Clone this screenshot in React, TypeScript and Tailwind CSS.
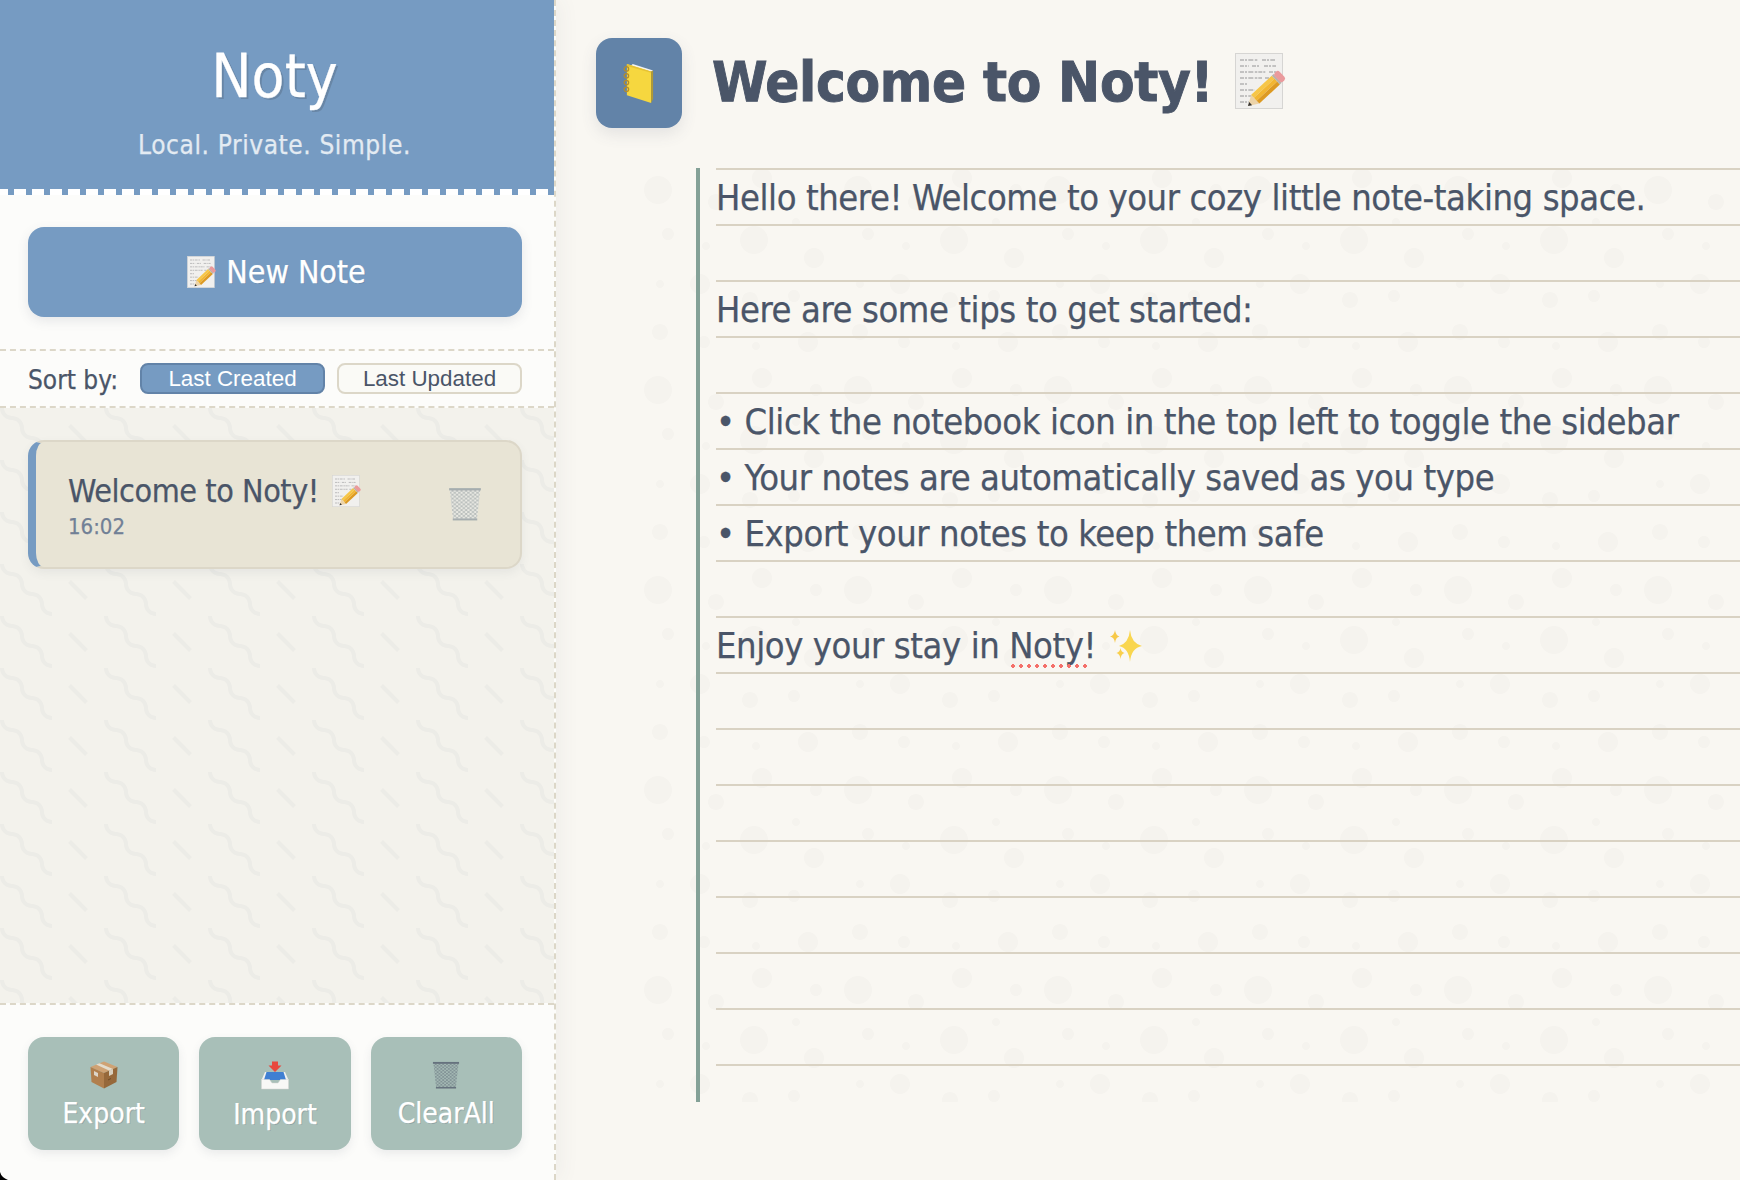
import React from "react";

function Memo({ className }: { className: string }) {
  return (
    <svg viewBox="0 0 52 56" className={className}>
      <rect x="0.5" y="0.5" width="47" height="55" fill="#f1f0ee" stroke="#d6d5d3" />
      <g stroke="#77777a" strokeWidth="0.75" fill="none" strokeDasharray="4 1 2 1.3 5 1.5 2.5 1">
        <path d="M5 7h18M27 7h13" />
        <path d="M5 13h9M17 13h7M29 13h12" />
        <path d="M5 19h26M34 19h8" />
        <path d="M5 25h22M30 25h8" />
        <path d="M5 31h7" />
        <path d="M5 37h15" />
        <path d="M5 43h14" />
        <path d="M5 49h9" />
      </g>
      <g transform="translate(13 53) rotate(-43)">
        <polygon points="0,0 10,-6 10,6" fill="#ecd3a8" />
        <polygon points="0,0 3.6,-2.2 3.6,2.2" fill="#333" />
        <rect x="10" y="-6" width="28" height="4" fill="#f6c648" />
        <rect x="10" y="-2" width="28" height="4" fill="#f2b632" />
        <rect x="10" y="2" width="28" height="4" fill="#dd9a22" />
        <rect x="38" y="-6" width="2.5" height="12" fill="#b9b3aa" />
        <rect x="40" y="-6" width="6.5" height="12" rx="2.5" fill="#ea9a9c" />
      </g>
    </svg>
  );
}

function Basket({ className, id, stroke, rim, fill }: { className: string; id: string; stroke: string; rim: string; fill: string }) {
  return (
    <svg viewBox="0 0 30 30" className={className}>
      <defs>
        <pattern id={id} width="4" height="3.4" patternUnits="userSpaceOnUse">
          <path d="M0 0L4 3.4M4 0L0 3.4" stroke={stroke} strokeWidth="0.5" />
        </pattern>
      </defs>
      <path d="M1.5 2h27l-3 27h-21z" fill={fill} />
      <path d="M1.5 2h27l-3 27h-21z" fill={`url(#${id})`} />
      <path d="M1 1h28v2H1z" fill={rim} />
      <path d="M4.2 27.8h21.6v1.7H4.2z" fill={rim} />
    </svg>
  );
}

function Box({ className }: { className: string }) {
  return (
    <svg viewBox="0 0 28 28" className={className}>
      <polygon points="14,0.5 27.5,6 14,12 0.5,6" fill="#cfa274" />
      <polygon points="0.5,6 14,12 14,27.5 1.5,21" fill="#b17f4d" />
      <polygon points="27.5,6 14,12 14,27.5 26.5,21" fill="#96683a" />
      <polygon points="6,3.6 9.5,2.2 23,8 19,9.6" fill="#e3dccd" />
      <polygon points="19,9.6 23,8 23,13 19,15" fill="#d9cfbd" />
      <polygon points="4,10 8,12 8,16 4,14" fill="#ddd5c8" />
      <path d="M18 19l3-1.5" stroke="#6f4b28" strokeWidth="1" />
    </svg>
  );
}

function Inbox({ className }: { className: string }) {
  return (
    <svg viewBox="0 0 28 29" className={className}>
      <polygon points="11,0.5 17,0.5 17,4.5 20.5,4.5 14,11 7.5,4.5 11,4.5" fill="#e8483f" />
      <polygon points="4,11 24,11 27.5,19 0.5,19" fill="#f2f2f0" />
      <polygon points="5.5,11 22.5,11 25,19 3,19" fill="#3f7fd2" />
      <path d="M0.5 18.5h8l2.5 3.5h6l2.5-3.5h8v9.5h-27z" fill="#f8f8f6" stroke="#d6d6d3" strokeWidth="0.5" />
    </svg>
  );
}

function Notebook({ className }: { className: string }) {
  return (
    <svg viewBox="0 0 33 42" className={className}>
      <polygon points="8,1 31,8 31,37 29,38 29,9" fill="#8f8a74" />
      <polygon points="10,1 31,7.5 29,9 8,3" fill="#f3f3f0" />
      <polygon points="4,1 29,8.5 29,41 4,33" fill="#f6d73f" />
      <polygon points="4,1 29,8.5 29,10 4,3" fill="#e6c233" />
      <polygon points="29,8.5 31,7.5 31,37 29,41" fill="#b09a35" />
      <g fill="none" stroke="#b58d2a" strokeWidth="1.3">
        <circle cx="3.5" cy="6" r="2.3" />
        <circle cx="3.5" cy="13" r="2.3" />
        <circle cx="3.5" cy="20" r="2.3" />
        <circle cx="3.5" cy="27" r="2.3" />
      </g>
    </svg>
  );
}

function Sparkles({ className }: { className: string }) {
  return (
    <svg viewBox="0 0 32 32" className={className}>
      <path d="M20 0Q21.2 13 32 16Q21.2 18 20 32Q18.8 18 9 16Q18.8 13 20 0z" fill="#f9d64f" />
      <path d="M5 0Q5.6 5.4 9.5 6.5Q5.6 7.4 5 13Q4.4 7.4 0 6.5Q4.4 5.4 5 0z" fill="#f7c948" />
      <path d="M10.5 18Q11 21.8 14.5 23Q11 24 10.5 29Q10 24 6.5 23Q10 21.8 10.5 18z" fill="#f9cf4c" />
    </svg>
  );
}

const Line = ({ children }: { children?: React.ReactNode }) => (
  <div className="h-14 pl-0 leading-[56px] whitespace-nowrap">{children}</div>
);

export default function App() {
  return (
    <div className="relative flex h-screen w-full overflow-hidden bg-[#f9f7f2] font-['DejaVu_Sans_Condensed','DejaVu_Sans',sans-serif] text-[#4a5568] [-webkit-text-stroke:0.25px]">
      <aside className="relative z-10 flex w-[556px] shrink-0 flex-col border-r-2 border-dashed border-[#dcd7c8] bg-[#fcfcfa] shadow-[4px_0_20px_rgba(74,85,104,0.06)]">
        <header className="flex h-[189px] flex-col items-center bg-[#769bc2] pt-[40px] pr-[5px] text-white">
          <h1 className="text-[60px] leading-[72px] font-normal [text-shadow:2px_2px_0_rgba(74,85,104,0.3)]">Noty</h1>
          <p className="mt-[15px] text-[26px] leading-[36px] tracking-[0.6px] opacity-80">Local. Private. Simple.</p>
        </header>
        <div className="h-[6px] bg-[linear-gradient(90deg,#ffffff_12px,#769bc2_12px)] bg-[length:18px_6px] bg-[position:-4px_0]"></div>

        <div className="pt-8 pr-8 pb-8 pl-7">
          <button className="flex h-[90px] w-full items-center justify-center gap-[9px] rounded-2xl bg-[#769bc2] pl-[3px] text-[32px] text-white shadow-[0_4px_12px_rgba(74,85,104,0.12)] [text-shadow:1px_1px_0_rgba(74,85,104,0.2)]">
            <Memo className="h-8 w-[30px]" />
            <span className="tracking-[-0.1px]">New Note</span>
          </button>
        </div>

        <div className="flex h-[59px] items-center border-y-2 border-dashed border-[#dcd7c8] pr-8 pl-7">
          <span className="w-[112px] pt-[2px] text-[26px] leading-8">Sort by:</span>
          <div className="flex flex-1 gap-3 [-webkit-text-stroke:0]">
            <button className="h-[31px] flex-1 rounded-lg border-2 border-[#6283a8] bg-[#769bc2] font-['Liberation_Sans',sans-serif] text-[22.4px] leading-[24px] text-white">Last Created</button>
            <button className="h-[31px] flex-1 rounded-lg border-2 border-[#dcd7c8] bg-[#fafaf6] font-['Liberation_Sans',sans-serif] text-[22.4px] leading-[24px]">Last Updated</button>
          </div>
        </div>

        <div className="flex-1 bg-[#f3f2ec] bg-[url('data:image/svg+xml,%3Csvg%20xmlns=%22http://www.w3.org/2000/svg%22%20width=%2252%22%20height=%2226%22%20viewBox=%220%200%2052%2026%22%3E%3Cpath%20fill=%22%234a5568%22%20fill-opacity=%220.04%22%20d=%22M10%2010c0-2.21-1.79-4-4-4-3.314%200-6-2.686-6-6h2c0%202.21%201.79%204%204%204%203.314%200%206%202.686%206%206%200%202.21%201.79%204%204%204%203.314%200%206%202.686%206%206%200%202.21%201.79%204%204%204v2c-3.314%200-6-2.686-6-6%200-2.21-1.79-4-4-4-3.314%200-6-2.686-6-6zm25.464-1.95l8.486%208.486-1.414%201.414-8.486-8.486%201.414-1.414z%22/%3E%3C/svg%3E')] bg-[length:104px_52px] pt-8 pr-8 pl-7">
          <div className="flex h-[129px] items-center rounded-2xl border-2 border-l-8 border-[#dcd7c8] border-l-[#769bc2] bg-[#e8e4d5] pr-[38px] pl-[32px] shadow-[0_4px_10px_rgba(74,85,104,0.08)]">
            <div className="flex-1 pt-[2px]">
              <div className="flex items-center gap-[13px] text-[32px] leading-[40px] tracking-[-0.42px] whitespace-nowrap">
                Welcome to Noty!
                <Memo className="h-8 w-[30px]" />
              </div>
              <div className="mt-[2px] text-[22px] leading-[28px] text-[#718096]">16:02</div>
            </div>
            <Basket className="mt-[-2px] h-[36px] w-[34px]" id="mesh-a" stroke="#939b9d" rim="#a6adaf" fill="#e9e9e3" />
          </div>
        </div>

        <footer className="flex h-[177px] gap-5 border-t-2 border-dashed border-[#dcd7c8] pt-[32px] pr-8 pl-7">
          {[
            { label: "Export", icon: <Box className="h-7 w-7" /> },
            { label: "Import", icon: <Inbox className="h-[29px] w-7" /> },
            { label: "ClearAll", icon: <Basket className="h-7 w-7" id="mesh-b" stroke="#66727e" rim="#66727e" fill="#a3b8b3" /> },
          ].map((b) => (
            <button key={b.label} className="flex h-[113px] flex-1 flex-col items-center rounded-2xl bg-[#a8bfb8] pt-6 text-[28px] leading-[36px] text-white shadow-[0_4px_10px_rgba(74,85,104,0.1)] [text-shadow:1px_1px_0_rgba(74,85,104,0.25)]">
              {b.icon}
              <span className="mt-[7px]">{b.label}</span>
            </button>
          ))}
        </footer>
      </aside>

      <main className="min-w-0 flex-1 pt-[38px] pl-10">
        <div className="flex h-[130px] items-start">
          <button className="flex h-[90px] w-[86px] shrink-0 items-center justify-center rounded-2xl bg-[#6283a8] shadow-[0_6px_16px_rgba(74,85,104,0.12)]">
            <Notebook className="h-[41px] w-8" />
          </button>
          <h2 className="mt-[8px] ml-[30px] flex items-center gap-[22px] text-[56px] leading-[72px] font-bold tracking-[-0.35px] whitespace-nowrap [-webkit-text-stroke:0.9px]">
            Welcome to Noty!
            <Memo className="mb-[3px] h-14 w-[52px]" />
          </h2>
        </div>

        <div className="ml-10 h-[934px] bg-[url('data:image/svg+xml,%3Csvg%20xmlns=%22http://www.w3.org/2000/svg%22%20width=%22100%22%20height=%22100%22%20viewBox=%220%200%20100%20100%22%3E%3Cpath%20fill=%22%234a4a3a%22%20fill-opacity=%220.02%22%20fill-rule=%22evenodd%22%20d=%22M11%2018c3.866%200%207-3.134%207-7s-3.134-7-7-7-7%203.134-7%207%203.134%207%207%207zm48%2025c3.866%200%207-3.134%207-7s-3.134-7-7-7-7%203.134-7%207%203.134%207%207%207zm-43-7c1.657%200%203-1.343%203-3s-1.343-3-3-3-3%201.343-3%203%201.343%203%203%203zm63%2031c1.657%200%203-1.343%203-3s-1.343-3-3-3-3%201.343-3%203%201.343%203%203%203zM34%2090c1.657%200%203-1.343%203-3s-1.343-3-3-3-3%201.343-3%203%201.343%203%203%203zm56-76c1.657%200%203-1.343%203-3s-1.343-3-3-3-3%201.343-3%203%201.343%203%203%203zM12%2086c2.21%200%204-1.79%204-4s-1.79-4-4-4-4%201.79-4%204%201.79%204%204%204zm28-65c2.21%200%204-1.79%204-4s-1.79-4-4-4-4%201.79-4%204%201.79%204%204%204zm23-11c2.76%200%205-2.24%205-5s-2.24-5-5-5-5%202.24-5%205%202.24%205%205%205zm-6%2060c2.21%200%204-1.79%204-4s-1.79-4-4-4-4%201.79-4%204%201.79%204%204%204zm29%2022c2.76%200%205-2.24%205-5s-2.24-5-5-5-5%202.24-5%205%202.24%205%205%205zM32%2063c2.76%200%205-2.24%205-5s-2.24-5-5-5-5%202.24-5%205%202.24%205%205%205zm57-13c2.76%200%205-2.24%205-5s-2.24-5-5-5-5%202.24-5%205%202.24%205%205%205zm-9-21c1.105%200%202-.895%202-2s-.895-2-2-2-2%20.895-2%202%20.895%202%202%202zM60%2091c1.105%200%202-.895%202-2s-.895-2-2-2-2%20.895-2%202%20.895%202%202%202zM35%2041c1.105%200%202-.895%202-2s-.895-2-2-2-2%20.895-2%202%20.895%202%202%202zM12%2060c1.105%200%202-.895%202-2s-.895-2-2-2-2%20.895-2%202%20.895%202%202%202z%22/%3E%3C/svg%3E')] bg-[length:200px_200px] pl-[60px]">
          <div className="h-full border-l-4 border-[#84a197] pl-4">
            <div className="h-full bg-[linear-gradient(#d9d2c3_2px,transparent_2px)] bg-[length:100%_56px] pt-[2px] text-[36px] tracking-[-0.41px]">
              <Line>Hello there! Welcome to your cozy little note-taking space.</Line>
              <Line />
              <Line>Here are some tips to get started:</Line>
              <Line />
              <Line>• Click the notebook icon in the top left to toggle the sidebar</Line>
              <Line>• Your notes are automatically saved as you type</Line>
              <Line>• Export your notes to keep them safe</Line>
              <Line />
              <Line>
                <span className="inline-flex items-center">
                  Enjoy your stay in&nbsp;
                  <span className="relative">
                    Noty
                    <span className="absolute right-[-8px] bottom-[6px] left-0 h-1 bg-[radial-gradient(circle,#f4706a_1.6px,transparent_1.9px)] bg-[length:8px_4px]"></span>
                  </span>
                  !
                  <Sparkles className="ml-[14px] h-8 w-8" />
                </span>
              </Line>
            </div>
          </div>
        </div>
      </main>

      <svg viewBox="0 0 8 8" className="absolute bottom-0 left-0 z-20 h-2 w-2">
        <path d="M0 0Q1.5 5.5 8 8H0z" fill="#000" />
      </svg>
    </div>
  );
}
